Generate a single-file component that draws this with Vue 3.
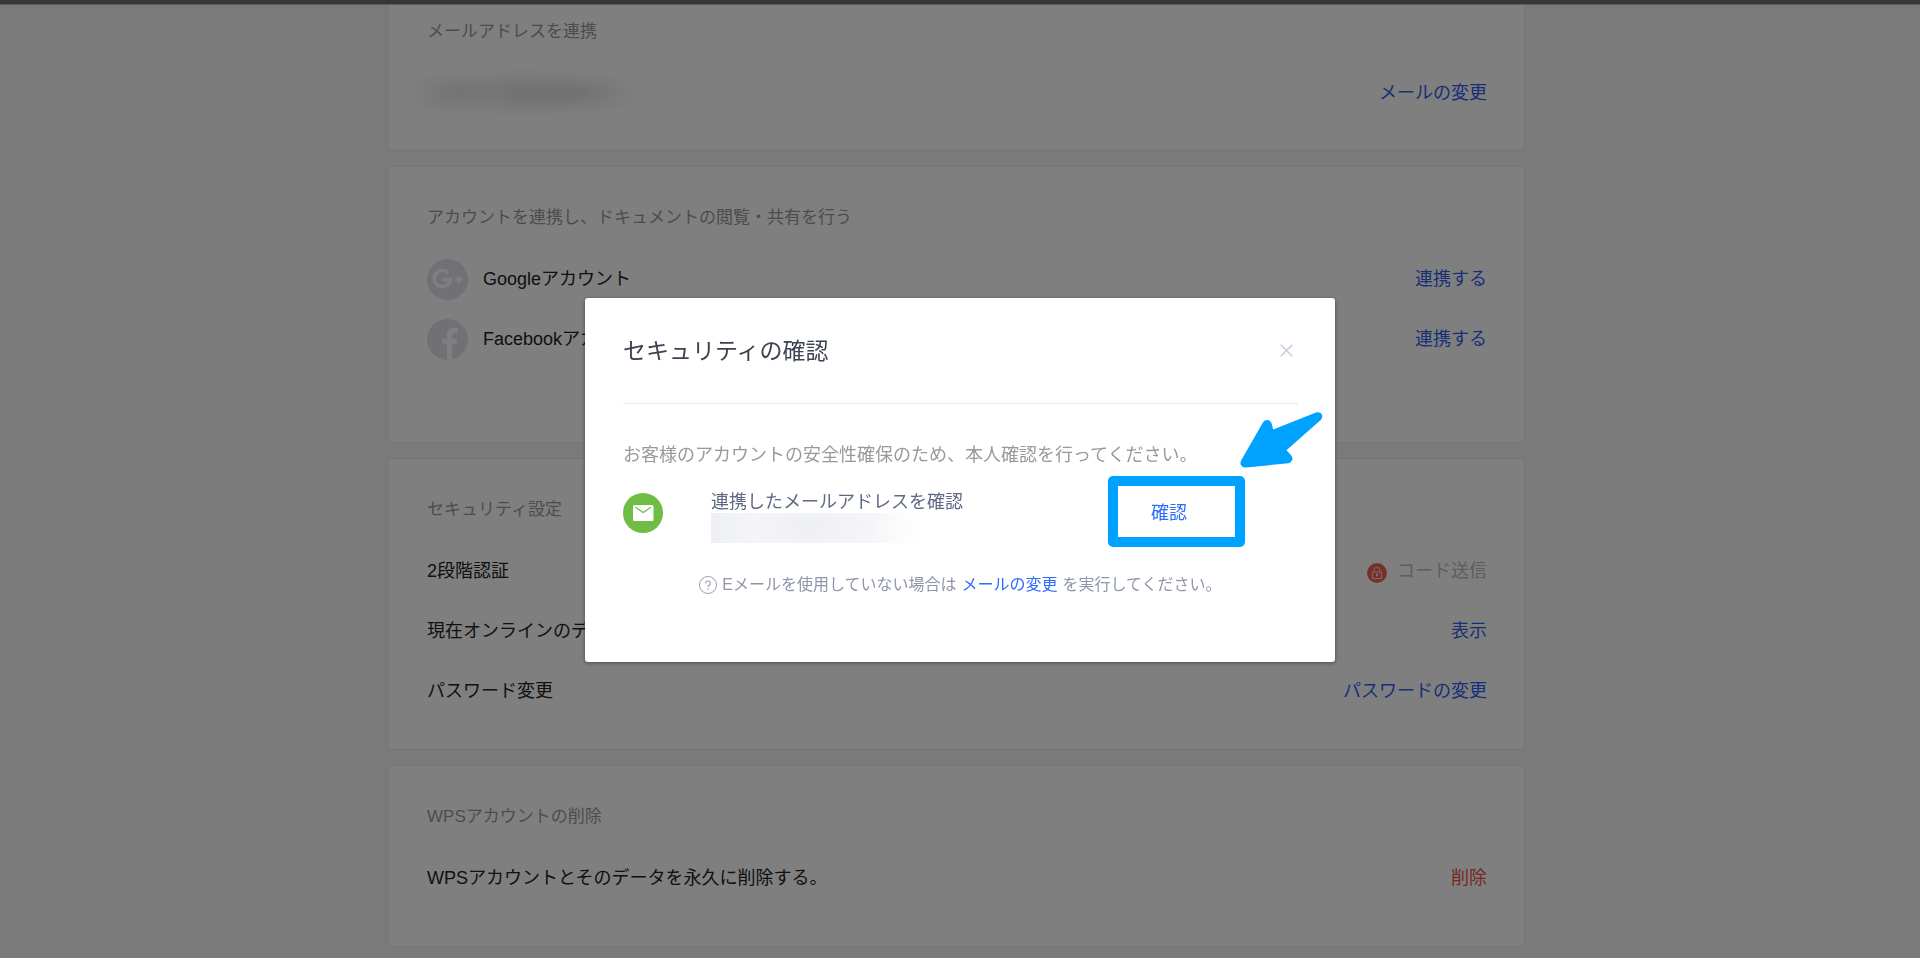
<script setup>
import { ref } from 'vue'

const open = ref(true)

const accounts = [
  { id: 'google', label: 'Googleアカウント' },
  { id: 'facebook', label: 'Facebookアカウント' }
]
</script>

<template>
  <div class="page">
    <header class="topbar"></header>

    <main class="content">
      <section class="card card-mail">
        <h2>メールアドレスを連携</h2>
        <div class="row">
          <span class="masked-mail"></span>
          <a href="#" class="link">メールの変更</a>
        </div>
      </section>

      <section class="card card-accounts">
        <h2>アカウントを連携し、ドキュメントの閲覧・共有を行う</h2>
        <div v-for="a in accounts" :key="a.id" class="row">
          <span class="account">
            <svg v-if="a.id === 'google'" class="account-icon" viewBox="0 0 41 41" aria-hidden="true">
              <circle cx="20.500" cy="20.500" r="20.500" fill="#dfe2e8" />
              <path d="M21.200 13.900A8.100 8.100 0 1 0 23.400 20.600H15.300" fill="none" stroke="#fff" stroke-width="3.600" />
              <path d="M32 16.700v8M28 20.700h8" stroke="#fff" stroke-width="2.600" />
            </svg>
            <svg v-else class="account-icon" viewBox="0 0 41 41" aria-hidden="true">
              <circle cx="20.500" cy="20.500" r="20.500" fill="#dfe2e8" />
              <path d="M20 41V25.200h-4.500v-5.500H20v-3.400c0-4.700 2.700-7.200 6.800-7.200h4v5h-2.800c-2.100 0-2.800 1-2.800 2.700v2.900h5.200l-.7 5.500h-4.500V40.500z" fill="#fff" />
            </svg>
            {{ a.label }}
          </span>
          <a href="#" class="link">連携する</a>
        </div>
      </section>

      <section class="card card-security">
        <h2>セキュリティ設定</h2>
        <div class="row">
          <span>2段階認証</span>
          <span class="code">
            <svg class="lock" viewBox="0 0 20 20" aria-hidden="true">
              <circle cx="10" cy="10" r="10" fill="#ec6452" />
              <path d="M6.800 9V7.700a3.200 3.200 0 0 1 6.400 0V9M5.500 9h9v6.500h-9z" fill="none" stroke="#fbd3cc" stroke-width="1" />
              <circle cx="10" cy="11.500" r="1" fill="#fff" />
              <path d="M10 11.500v2" stroke="#fff" stroke-width="1" />
            </svg>
            <button type="button" class="plain" disabled>コード送信</button>
          </span>
        </div>
        <div class="row">
          <span>現在オンラインのデバイス</span>
          <a href="#" class="link">表示</a>
        </div>
        <div class="row">
          <span>パスワード変更</span>
          <a href="#" class="link">パスワードの変更</a>
        </div>
      </section>

      <section class="card card-delete">
        <h2>WPSアカウントの削除</h2>
        <div class="row">
          <span>WPSアカウントとそのデータを永久に削除する。</span>
          <a href="#" class="link danger">削除</a>
        </div>
      </section>
    </main>

    <div v-if="open" class="overlay">
      <div class="modal" role="dialog" aria-modal="true" aria-labelledby="dialog-title">
        <div class="modal-head">
          <h1 id="dialog-title">セキュリティの確認</h1>
          <button type="button" class="close" aria-label="閉じる" @click="open = false">
            <svg viewBox="0 0 13 13" aria-hidden="true">
              <path d="M.7.700l11.600 11.600M12.300.700L.700 12.300" stroke="#c3cedd" stroke-width="1.500" />
            </svg>
          </button>
        </div>

        <p class="desc">お客様のアカウントの安全性確保のため、本人確認を行ってください。</p>

        <div class="verify">
          <svg class="mail-icon" viewBox="0 0 40 40" aria-hidden="true">
            <circle cx="20" cy="20" r="20" fill="#6fbd45" />
            <rect x="10" y="12" width="20.500" height="16" rx="1.500" fill="#fff" />
            <path d="M12.500 14.200l7.700 5.300 7.700-5.300" fill="none" stroke="#6fbd45" stroke-width="1.200" />
          </svg>
          <div class="verify-text">
            <span>連携したメールアドレスを確認</span>
            <span class="masked-modal"></span>
          </div>
          <button type="button" class="confirm">確認</button>
        </div>

        <p class="note">
          <svg class="help" viewBox="0 0 18 18" aria-hidden="true">
            <circle cx="9" cy="9" r="8.500" fill="none" stroke="#9aa1b5" />
            <path d="M6.700 7.300a2.300 2.300 0 1 1 3.600 1.900c-.9.600-1.300 1-1.300 1.900" fill="none" stroke="#9aa1b5" stroke-width="1.200" />
            <circle cx="9" cy="13" r=".8" fill="#9aa1b5" />
          </svg>
          <span>Eメールを使用していない場合は</span>
          <a href="#" class="note-link">メールの変更</a>
          <span>を実行してください。</span>
        </p>

        <div class="highlight"></div>
        <svg class="arrow" viewBox="480 363 250 174" aria-hidden="true">
          <path d="M549 397Q554 390 562 390Q572 391 575 400L580 418L709 367Q721 364 727 373Q730 383 723 390L620 481L634 496Q640 504 637 511Q633 518 626 520L498 533Q486 534 482 524Q480 516 485 509Z" fill="#00a2ff" />
        </svg>
      </div>
    </div>
  </div>
</template>

<style>
html,
body {
  margin: 0;
  background: #f5f5f5;
}
</style>

<style scoped>
.page {
  min-height: 100vh;
  background: #f5f5f5;
  color: #222;
  font-family: "Liberation Sans", "Noto Sans CJK JP", sans-serif;
  font-size: 18px;
  font-weight: 400;
  line-height: 26px;
}

.topbar {
  height: 4px;
  background: #6c6e76;
  border-bottom: 1px solid #b4b7c0;
}

.content {
  display: flex;
  flex-direction: column;
  gap: 15px;
  max-width: 1137px;
  margin: 0 auto;
  padding-right: 7px;
}

.card {
  box-sizing: border-box;
  padding: 38px 37px 28px 38px;
  background: #fff;
  border: 1px solid #ebebeb;
  border-radius: 3px;
}

.card-mail {
  padding-top: 14px;
  padding-bottom: 27px;
  border-top: 0;
  border-radius: 0 0 3px 3px;
}

.card-accounts {
  padding-bottom: 73px;
}

.card-delete {
  padding-bottom: 38px;
}

h1,
h2,
p {
  margin: 0;
  font-weight: 400;
}

h2 {
  margin-bottom: 18px;
  color: #999;
  font-size: 17px;
}

.row {
  display: flex;
  align-items: center;
  justify-content: space-between;
  height: 60px;
}

a {
  text-decoration: none;
}

button {
  padding: 0;
  border: 0;
  background: none;
  font: inherit;
  cursor: pointer;
}

.link {
  color: #2f5fee;
}

.link.danger {
  color: #ee4e3c;
}

.account {
  display: flex;
  align-items: center;
  gap: 15px;
}

.account-icon {
  width: 41px;
  height: 41px;
}

.masked-mail {
  width: 225px;
  height: 50px;
  margin-left: -12px;
  background:
    radial-gradient(ellipse 70px 26px at 108px 25px, rgba(0, 0, 0, 0.12), transparent),
    radial-gradient(ellipse 46px 24px at 38px 25px, rgba(0, 0, 0, 0.09), transparent),
    radial-gradient(ellipse 56px 24px at 170px 25px, rgba(0, 0, 0, 0.09), transparent);
}

.code {
  display: flex;
  align-items: center;
  gap: 10px;
}

.lock {
  width: 20px;
  height: 20px;
  margin-top: 4px;
}

.plain {
  color: #b9bcc4;
}

.overlay {
  position: fixed;
  inset: 0;
  display: flex;
  align-items: center;
  justify-content: center;
  padding-top: 2px;
  background: rgba(0, 0, 0, 0.5);
}

.modal {
  position: relative;
  box-sizing: border-box;
  width: 750px;
  padding: 0 37px 64px 38px;
  background: #fff;
  border-radius: 3px;
  box-shadow: 0 1px 4px rgba(0, 0, 0, 0.4);
}

.modal-head {
  display: flex;
  align-items: center;
  justify-content: space-between;
  height: 105px;
  border-bottom: 1px solid #e7e8ea;
}

h1 {
  color: #3d4350;
  font-size: 23px;
  line-height: 32px;
}

.close {
  display: flex;
  padding: 5px;
}

.close svg {
  width: 13px;
  height: 13px;
}

.desc {
  margin-top: 38px;
  color: #999;
}

.verify {
  display: grid;
  grid-template-columns: 88px 1fr 147px;
  align-items: center;
  height: 60px;
  margin-top: 15px;
}

.mail-icon {
  width: 40px;
  height: 40px;
}

.verify-text {
  display: flex;
  flex-direction: column;
  align-self: end;
  color: #5f6884;
  line-height: 22px;
}

.masked-modal {
  width: 215px;
  height: 30px;
  background:
    linear-gradient(90deg, transparent 75%, #fff 98%),
    radial-gradient(ellipse 90px 34px at 95px 14px, #eeeff2, transparent),
    linear-gradient(90deg, #eceef2, #f8f8fa 20%, #f7f7f9);
}

.confirm {
  justify-self: start;
  color: #2f6bff;
}

.note {
  display: flex;
  align-items: center;
  justify-content: center;
  gap: 5px;
  margin-top: 29px;
  color: #8f96ac;
  font-size: 16px;
}

.help {
  width: 18px;
  height: 18px;
}

.note-link {
  color: #2f6bff;
}

.highlight {
  position: absolute;
  top: 178px;
  right: 90px;
  box-sizing: border-box;
  width: 137px;
  height: 71px;
  border: 10px solid #00a2ff;
  border-radius: 5px;
  pointer-events: none;
}

.arrow {
  position: absolute;
  top: 113px;
  right: 12px;
  width: 83px;
  height: 58px;
  pointer-events: none;
}
</style>
